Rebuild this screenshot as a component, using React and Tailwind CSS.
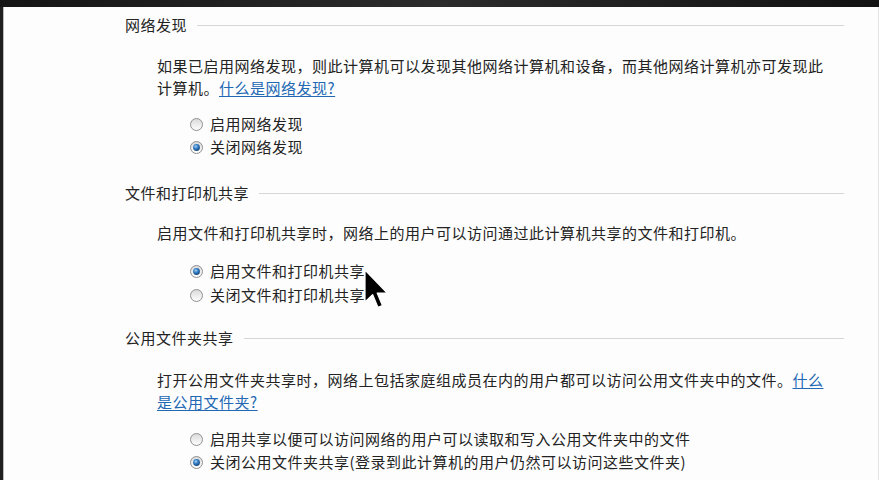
import React from 'react'

const font = { fontFamily: '"Noto Sans CJK SC", "Noto Sans", sans-serif' }

function Radio({ checked }) {
  return (
    <svg width="13" height="13" viewBox="0 0 13 13" className="shrink-0">
      <defs>
        <linearGradient id="rbg" x1="0" y1="0" x2="0" y2="1">
          <stop offset="0" stopColor="#d9d9d9" />
          <stop offset="1" stopColor="#ffffff" />
        </linearGradient>
        <radialGradient id="rdot" cx="0.4" cy="0.35" r="0.7">
          <stop offset="0" stopColor="#9fd0f5" />
          <stop offset="0.5" stopColor="#2f78c0" />
          <stop offset="1" stopColor="#123f70" />
        </radialGradient>
      </defs>
      <circle cx="6.5" cy="6.5" r="6" fill="url(#rbg)" stroke="#909090" strokeWidth="1" />
      {checked && <circle cx="6.5" cy="6.5" r="3.4" fill="url(#rdot)" />}
    </svg>
  )
}

function Heading({ children, mt }) {
  return (
    <div className={`flex items-center h-[20px] pl-[121px] ${mt}`}>
      <span className="text-[15px] leading-[20px] tracking-[0.5px] text-[#232323] whitespace-nowrap">{children}</span>
      <div className="flex-1 h-px bg-[#d6d6d6] ml-[10px]" />
    </div>
  )
}

function Option({ checked, children }) {
  return (
    <div className="flex items-center h-[23px] pl-[186px] gap-[7px]">
      <Radio checked={checked} />
      <span className="text-[15px] tracking-[0.5px] text-[#232323] whitespace-nowrap">{children}</span>
    </div>
  )
}

function Link({ children }) {
  return <span className="text-[#2268b3] underline underline-offset-2">{children}</span>
}

export default function App() {
  return (
    <div className="w-[879px] h-[480px] flex flex-col bg-[#1b1b1b] overflow-hidden" style={font}>
      <div className="h-[7px] bg-gradient-to-r from-[#151515] via-[#2c2c2c] to-[#121212]" />
      <div className="flex flex-1">
        <div className="w-[3px] bg-[#202020]" />
        <div className="relative flex-1 bg-[#fdfdfd] border-l border-[#bdbdbd] border-r border-r-[#e3e3e3] pr-[34px] pt-[8px]">
          <Heading>网络发现</Heading>
          <p className="mt-[20px] pl-[153px] text-[15px] leading-[22px] tracking-[0.5px] text-[#232323] whitespace-nowrap">
            如果已启用网络发现，则此计算机可以发现其他网络计算机和设备，而其他网络计算机亦可发现此
            <br />
            计算机。<Link>什么是网络发现?</Link>
          </p>
          <div className="mt-[14px]">
            <Option>启用网络发现</Option>
            <Option checked>关闭网络发现</Option>
          </div>

          <Heading mt="mt-[24px]">文件和打印机共享</Heading>
          <p className="mt-[19px] pl-[153px] text-[15px] leading-[22px] tracking-[0.5px] text-[#232323] whitespace-nowrap">
            启用文件和打印机共享时，网络上的用户可以访问通过此计算机共享的文件和打印机。
          </p>
          <div className="mt-[16px] flex flex-col gap-[1px]">
            <Option checked>启用文件和打印机共享</Option>
            <Option>关闭文件和打印机共享</Option>
          </div>

          <Heading mt="mt-[21px]">公用文件夹共享</Heading>
          <p className="mt-[21px] pl-[153px] text-[15px] leading-[22px] tracking-[0.5px] text-[#232323] whitespace-nowrap">
            打开公用文件夹共享时，网络上包括家庭组成员在内的用户都可以访问公用文件夹中的文件。<Link>什么</Link>
            <br />
            <Link>是公用文件夹?</Link>
          </p>
          <div className="mt-[15px]">
            <Option>启用共享以便可以访问网络的用户可以读取和写入公用文件夹中的文件</Option>
            <Option checked>关闭公用文件夹共享(登录到此计算机的用户仍然可以访问这些文件夹)</Option>
          </div>

          <svg className="absolute left-[360px] top-[262px]" width="24" height="40" viewBox="0 0 12 20">
            <path d="M0.5 0.5 L0.5 16.5 L4.3 12.8 L7 19.2 L9.2 18.3 L6.6 12 L11.6 12 Z" fill="#000" stroke="#fff" strokeWidth="0.6" strokeLinejoin="round" />
          </svg>
        </div>
      </div>
    </div>
  )
}
